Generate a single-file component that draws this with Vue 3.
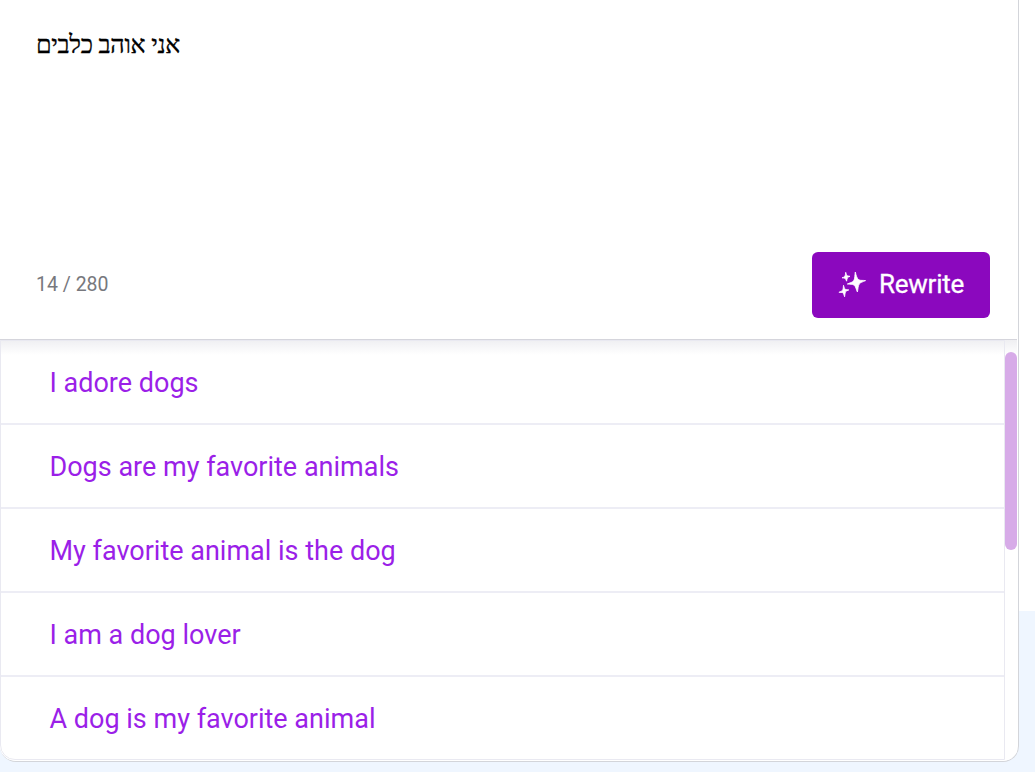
<template>
  <div class="page">
    <div class="card">
      <div class="editor">
        <div class="text" dir="rtl">{{ text }}</div>
        <div class="footer">
          <span class="counter">{{ text.length }} / 280</span>
          <button class="rewrite">
            <svg width="28" height="28" viewBox="0 0 28 28" fill="#fff" stroke="#fff" stroke-width="0.8" stroke-linejoin="round">
              <path d="M17.3 1 C18.3 5 19 7.5 20.8 8.8 C22.5 9.7 25 9.2 27.6 9.6 C25 10.8 22.3 11.4 21.2 13.1 C20 15.2 20.1 18 19.4 21 C18.1 18.2 17.7 15.5 16.2 14.2 C14.5 13 12 13.6 9.3 13 C12 11.8 14.6 11.4 15.8 9.6 C17 7.5 16.7 4.2 17.3 1Z" />
              <path d="M7.7 1.3 C8.4 3.3 8.5 4.2 9.2 4.7 C9.9 5.1 11 5 12 5.3 C11 5.9 9.9 6.1 9.4 6.9 C8.9 7.8 9 9 8.6 10.2 C8 9 7.8 8 7.1 7.4 C6.4 6.9 5.3 7.1 4 6.8 C5.3 6.3 6.4 6.1 6.9 5.3 C7.5 4.3 7.4 2.8 7.7 1.3Z" />
              <path d="M5.5 14.3 C6.2 16.3 6.4 17.7 7.3 18.3 C8.2 18.8 9.5 18.6 10.8 18.9 C9.5 19.5 8.2 19.8 7.5 20.8 C6.9 22 7 24 6.6 25.8 C5.9 24 5.7 22.4 4.8 21.7 C3.9 21.2 2.4 21.6 0.9 21.3 C2.3 20.6 3.9 20.3 4.6 19.2 C5.4 17.9 5.2 16 5.5 14.3Z" />
            </svg>
            <span class="label">Rewrite</span>
          </button>
        </div>
      </div>
      <div class="results">
        <ul class="list">
          <li v-for="(item, index) in suggestions" :key="index">{{ item }}</li>
        </ul>
        <div class="scrollbar">
          <div class="thumb"></div>
        </div>
      </div>
    </div>
  </div>
</template>

<script setup>
import { ref } from 'vue';

const text = ref('אני אוהב כלבים');
const suggestions = ref([
  'I adore dogs',
  'Dogs are my favorite animals',
  'My favorite animal is the dog',
  'I am a dog lover',
  'A dog is my favorite animal',
]);
</script>

<style>
body {
  margin: 0;
  overflow: hidden;
}
</style>

<style scoped>
.page {
  height: 772px;
  background: linear-gradient(#fff 611px, #eff6ff 611px);
  font-family: Roboto, sans-serif;
}
.card {
  box-sizing: border-box;
  width: 1019px;
  height: 762px;
  display: flex;
  flex-direction: column;
  background: #fff;
  border-right: 1px solid #d3d5da;
  border-bottom: 1px solid #d3d5da;
  border-radius: 0 0 16px 16px;
  overflow: hidden;
}
.editor {
  box-sizing: border-box;
  flex: none;
  height: 339px;
  padding: 30px 28px 21px 36px;
  display: flex;
  flex-direction: column;
  justify-content: space-between;
}
.text {
  align-self: flex-start;
  font-family: "Liberation Serif", serif;
  font-size: 25px;
  line-height: 30px;
  letter-spacing: -0.3px;
  color: #000;
  -webkit-text-stroke: 0.3px #000;
}
.footer {
  display: flex;
  align-items: center;
  justify-content: space-between;
}
.counter {
  padding-bottom: 2px;
  font-size: 19.5px;
  color: #77787d;
}
.rewrite {
  width: 178px;
  height: 66px;
  padding: 0 0 0 26px;
  display: flex;
  align-items: center;
  gap: 13px;
  border: 0;
  border-radius: 6px;
  background: #8b08be;
  color: #fff;
  font-family: inherit;
  font-size: 26px;
  letter-spacing: -0.25px;
  -webkit-text-stroke: 0.3px #fff;
}
.label {
  padding-bottom: 2px;
}
.results {
  flex: 1;
  margin-right: 1px;
  display: flex;
  border-top: 1px solid #d5d5dc;
  background: linear-gradient(#efeff2, #fff 15px);
}
.list {
  box-sizing: border-box;
  width: 1005px;
  height: 420px;
  margin: 0;
  padding: 0;
  list-style: none;
  border: 1px solid #e9e9f1;
  border-bottom-left-radius: 15px;
}
li {
  box-sizing: border-box;
  height: 84px;
  padding-left: 48.5px;
  line-height: 85px;
  font-size: 27px;
  color: #9b1fe8;
  border-bottom: 2px solid #ededf5;
}
li:last-child {
  height: 82px;
  border-bottom: 0;
}
.scrollbar {
  flex: 1;
  padding-top: 12px;
}
.thumb {
  height: 198px;
  border-radius: 6px;
  background: #d7abe8;
}
</style>
